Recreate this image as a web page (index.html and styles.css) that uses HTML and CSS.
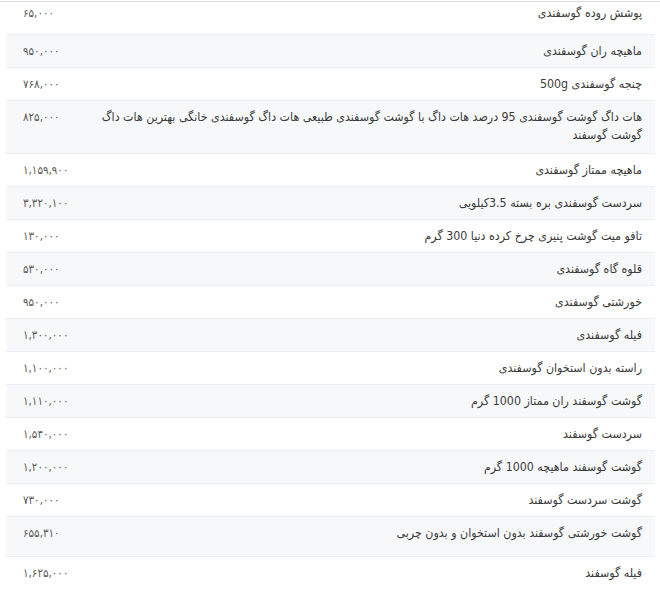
FILE: index.html
```html
<!DOCTYPE html>
<html lang="fa" dir="rtl">
<head>
<meta charset="utf-8">
<title>قیمت گوشت گوسفندی</title>
<link rel="stylesheet" href="styles.css">
</head>
<body>
<div class="wrap">
<table class="prices">
<colgroup><col class="c-name"><col class="c-price"></colgroup>
<tbody>
<tr class="first"><td class="name">پوشش روده گوسفندی</td><td class="price">۶۵,۰۰۰</td></tr>
<tr><td class="name">ماهیچه ران گوسفندی</td><td class="price">۹۵۰,۰۰۰</td></tr>
<tr><td class="name">چنجه گوسفندی 500g</td><td class="price">۷۶۸,۰۰۰</td></tr>
<tr class="two"><td class="name">هات داگ گوشت گوسفندی 95 درصد هات داگ با گوشت گوسفندی طبیعی هات داگ گوسفندی خانگی بهترین هات داگ گوشت گوسفند</td><td class="price">۸۲۵,۰۰۰</td></tr>
<tr><td class="name">ماهیچه ممتاز گوسفندی</td><td class="price">۱,۱۵۹,۹۰۰</td></tr>
<tr><td class="name">سردست گوسفندی بره بسته 3.5کیلویی</td><td class="price">۳,۳۲۰,۱۰۰</td></tr>
<tr><td class="name">تافو میت گوشت پنیری چرخ کرده دنیا 300 گرم</td><td class="price">۱۳۰,۰۰۰</td></tr>
<tr><td class="name">قلوه گاه گوسفندی</td><td class="price">۵۳۰,۰۰۰</td></tr>
<tr><td class="name">خورشتی گوسفندی</td><td class="price">۹۵۰,۰۰۰</td></tr>
<tr><td class="name">فیله گوسفندی</td><td class="price">۱,۳۰۰,۰۰۰</td></tr>
<tr><td class="name">راسته بدون استخوان گوسفندی</td><td class="price">۱,۱۰۰,۰۰۰</td></tr>
<tr><td class="name">گوشت گوسفند ران ممتاز 1000 گرم</td><td class="price">۱,۱۱۰,۰۰۰</td></tr>
<tr><td class="name">سردست گوسفند</td><td class="price">۱,۵۴۰,۰۰۰</td></tr>
<tr><td class="name">گوشت گوسفند ماهیچه 1000 گرم</td><td class="price">۱,۲۰۰,۰۰۰</td></tr>
<tr><td class="name">گوشت سردست گوسفند</td><td class="price">۷۳۰,۰۰۰</td></tr>
<tr class="tall"><td class="name">گوشت خورشتی گوسفند بدون استخوان و بدون چربی</td><td class="price">۶۵۵,۳۱۰</td></tr>
<tr class="last"><td class="name">فیله گوسفند</td><td class="price">۱,۶۲۵,۰۰۰</td></tr>
</tbody>
</table>
</div>
</body>
</html>
```
FILE: styles.css
```css
html, body {
  margin: 0;
  padding: 0;
  background: #ffffff;
}

body {
  font-family: "DejaVu Sans Condensed", "DejaVu Sans", sans-serif;
  color: #3a3a3a;
}

.wrap {
  border-top: 1px solid #dcdde0;
  margin-top: 1px;
  padding: 0 5px 0 6px;
}

.prices {
  width: 100%;
  border-collapse: collapse;
  table-layout: fixed;
}

.c-price {
  width: 72px;
}

.prices td {
  border-bottom: 1px solid #eceef1;
  vertical-align: top;
  line-height: 18px;
  padding-top: 7px;
  padding-bottom: 7px;
}

.prices tr:nth-child(even) td {
  background: #f7f8fa;
}

.name {
  font-size: 12.3px;
  text-align: right;
  padding-right: 13px;
  padding-left: 3px;
}

.price {
  direction: ltr;
  text-align: left;
  font-size: 11.5px;
  color: #5a5a5a;
  padding-left: 17px;
  padding-right: 0;
  white-space: nowrap;
}

.prices tr.first td {
  padding-top: 2px;
  padding-bottom: 12px;
}

.prices tr.two td {
  padding-bottom: 9px;
}

.prices tr.tall td {
  padding-bottom: 14px;
}

.prices tr.last td {
  border-bottom: none;
}
```
